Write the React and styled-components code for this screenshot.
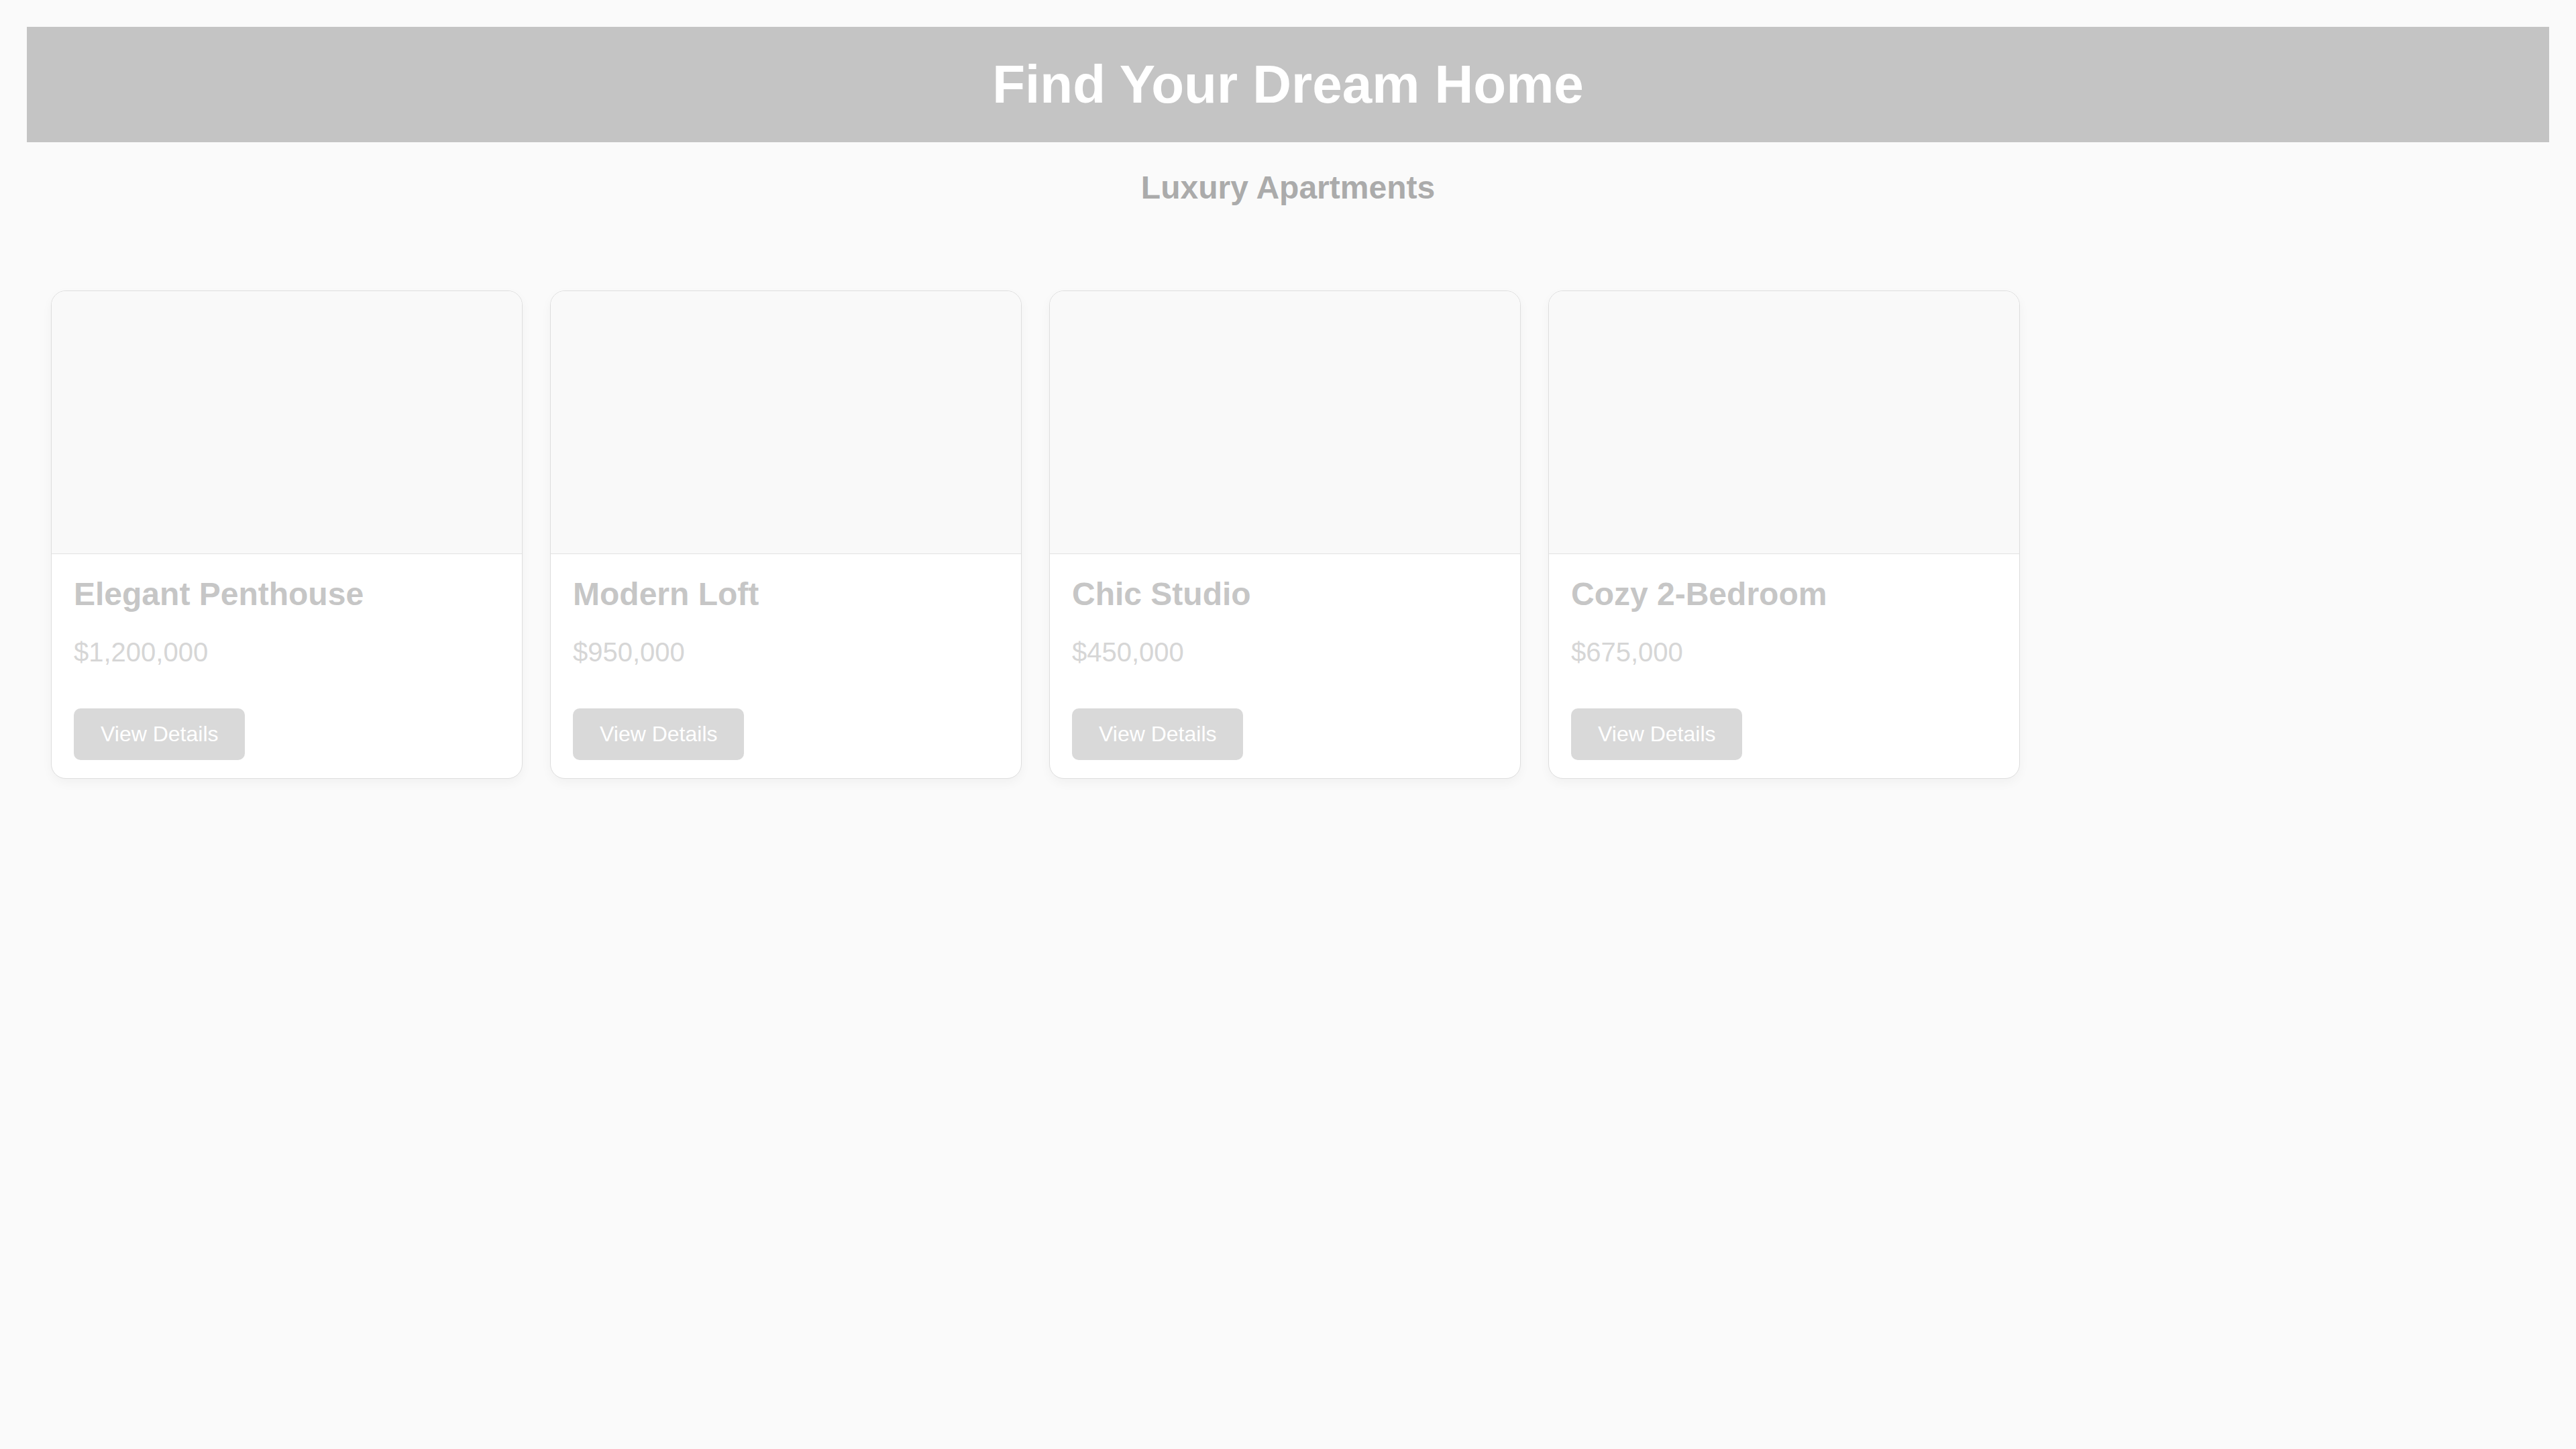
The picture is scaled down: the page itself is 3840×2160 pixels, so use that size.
import React from 'react';
import styled, { createGlobalStyle } from 'styled-components';

const listings = [
  { id: 1, title: 'Elegant Penthouse', price: '$1,200,000' },
  { id: 2, title: 'Modern Loft', price: '$950,000' },
  { id: 3, title: 'Chic Studio', price: '$450,000' },
  { id: 4, title: 'Cozy 2-Bedroom', price: '$675,000' }
];

const GlobalStyle = createGlobalStyle`
  html, body {
    margin: 0;
    padding: 0;
    background: #fafafa;
    font-family: "Liberation Sans", Arial, sans-serif;
  }
  * {
    box-sizing: border-box;
  }
`;

function App() {
  return (
    <>
      <GlobalStyle />
      <S.Page>
        <S.Header>
          <S.Title>Find Your Dream Home</S.Title>
        </S.Header>
        <S.Subtitle>Luxury Apartments</S.Subtitle>
        <S.Grid>
          {listings.map((item) => (
            <S.Card key={item.id}>
              <S.Photo />
              <S.Body>
                <S.Name>{item.title}</S.Name>
                <S.Price>{item.price}</S.Price>
                <S.Button type="button">View Details</S.Button>
              </S.Body>
            </S.Card>
          ))}
        </S.Grid>
      </S.Page>
    </>
  );
}

export default App;

const S = {
  Page: styled.div`
    padding: 40px;
    min-height: 100vh;
  `,
  Header: styled.header`
    background-color: #c4c4c4;
    padding: 40px;
    text-align: center;
  `,
  Title: styled.h1`
    margin: 0;
    color: #ffffff;
    font-size: 80px;
    font-weight: 700;
    line-height: normal;
  `,
  Subtitle: styled.h2`
    margin: 40px 0 0;
    text-align: center;
    color: #ababab;
    font-size: 48px;
    font-weight: 700;
    line-height: normal;
  `,
  Grid: styled.section`
    display: grid;
    grid-template-columns: repeat(4, 703px);
    gap: 41px;
    padding: 126px 0 0 36px;
  `,
  Card: styled.article`
    display: flex;
    flex-direction: column;
    background: #ffffff;
    border: 1px solid #dedede;
    border-radius: 22px;
    overflow: hidden;
    box-shadow: 0 6px 16px rgba(0, 0, 0, 0.04);
  `,
  Photo: styled.div`
    height: 392px;
    background: #f9f9f9;
    border-bottom: 1px solid #e2e2e2;
  `,
  Body: styled.div`
    display: flex;
    flex-direction: column;
    align-items: flex-start;
    padding: 32px 33px 27px;
  `,
  Name: styled.h3`
    margin: 0 0 37px;
    color: #c6c6c6;
    font-size: 48px;
    font-weight: 700;
    line-height: normal;
  `,
  Price: styled.p`
    margin: 0 0 61px;
    color: #d6d6d6;
    font-size: 40px;
    line-height: normal;
  `,
  Button: styled.button`
    border: none;
    border-radius: 10px;
    background: #d9d9d9;
    color: #ffffff;
    font-family: "Liberation Sans", Arial, sans-serif;
    font-size: 32px;
    line-height: normal;
    padding: 20px 40px;
    cursor: pointer;
  `
};
